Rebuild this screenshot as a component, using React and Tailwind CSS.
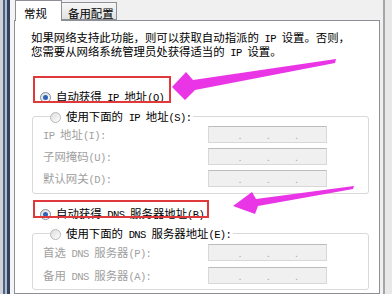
import React from "react";

// Latin runs are drawn narrower so they take half a CJK cell, like SimSun
function T({ children }) {
  const parts = String(children).split(/([\x20-\x7e]+)/);
  return (
    <>
      {parts.map((p, i) =>
        /^[\x20-\x7e]+$/.test(p) ? (
          <span key={i} className="text-[10.5px] tracking-[-0.6px] whitespace-pre font-[family-name:'Liberation_Mono',monospace]">
            {p}
          </span>
        ) : (
          <span key={i}>{p}</span>
        )
      )}
    </>
  );
}

function Radio({ checked }) {
  return (
    <span
      className={
        "w-[11px] h-[11px] rounded-full border flex items-center justify-center shrink-0 bg-linear-to-br from-[#dcdcdc] to-white " +
        (checked ? "border-[#7f8a99]" : "border-[#b9b9b9]")
      }
    >
      {checked && <span className="w-[5px] h-[5px] rounded-full bg-[#2d63b8]" />}
    </span>
  );
}

function IpBox() {
  return (
    <div className="w-[119px] h-[17px] border border-[#d8d8d8] border-t-[#bcbcbc] bg-[#f0f0f0] grid grid-cols-4 pl-[4px] text-[#a8a8a8] text-[9px] leading-[17px]">
      {[0, 1, 2, 3].map((i) => (
        <span key={i} className="text-right">
          {i < 3 ? "." : ""}
        </span>
      ))}
    </div>
  );
}

function Row({ label }) {
  return (
    <div className="flex items-center h-[17px]">
      <div className="w-[165px] text-[#a0a0a0]">
        <T>{label}</T>
      </div>
      <IpBox />
    </div>
  );
}

function Group({ legend, rows, pt, pb, gap }) {
  return (
    <fieldset className={"border border-[#d9d9d9] rounded-[3px] pl-[10px] " + pt + " " + pb}>
      <legend className="ml-[7px] pr-[2px] h-[16px] leading-[16px]">
        <span className="flex items-center gap-[5px]">
          <Radio />
          <span className="whitespace-nowrap">
            <T>{legend}</T>
          </span>
        </span>
      </legend>
      <div className={"flex flex-col " + gap}>
        {rows.map((r) => (
          <Row key={r} label={r} />
        ))}
      </div>
    </fieldset>
  );
}

export default function App() {
  return (
    <div className="relative w-[392px] h-[294px] overflow-hidden flex bg-[#f0f0f0] text-black text-[11.4px] leading-[12px] font-[family-name:'Noto_Sans_CJK_SC','Liberation_Sans',sans-serif]">
      {/* window frame on the left */}
      <div className="flex shrink-0 h-full">
        <div className="w-[3px] bg-[#cfd3da]" />
        <div className="w-[2px] bg-[#56627a]" />
        <div className="w-[2px] bg-[#aebdd1]" />
        <div className="w-[3px] bg-[#34425f]" />
        <div className="w-[4px] bg-[#f4f4f4]" />
      </div>

      {/* tab control */}
      <div className="w-[366px] shrink-0 flex flex-col">
        <div className="flex items-end h-[21px] -mb-[1px] relative z-10">
          <div className="ml-[1px] w-[47px] h-[21px] bg-white border border-b-0 border-[#8c8f96] pl-[8px] pt-[6px] leading-[12px]">
            常规
          </div>
          <div className="w-[55px] h-[18px] mb-[1px] bg-linear-to-b from-[#f6f6f6] to-[#e3e3e3] border border-l-0 border-[#8c8f96] pl-[6px] pt-[4px] leading-[12px]">
            备用配置
          </div>
        </div>

        <div className="flex-1 bg-white border border-[#8c8f96] pl-[17px] pr-[10px] pt-[10px]">
          <p className="-ml-[1px] whitespace-nowrap">
            <T>如果网络支持此功能，则可以获取自动指派的 IP 设置。否则，</T>
            <br />
            <T>您需要从网络系统管理员处获得适当的 IP 设置。</T>
          </p>

          <div className="mt-[27px] h-[22px] flex items-center pl-[8px] gap-[5px]">
            <Radio checked />
            <span className="whitespace-nowrap">
              <T>自动获得 IP 地址(O)</T>
            </span>
          </div>

          <Group
            legend="使用下面的 IP 地址(S):"
            rows={["IP 地址(I):", "子网掩码(U):", "默认网关(D):"]}
            pt="pt-[2px]"
            pb="pb-[6px]"
            gap="gap-[5px]"
          />

          <div className="mt-[9px] h-[22px] flex items-center pl-[8px] gap-[5px]">
            <Radio checked />
            <span className="whitespace-nowrap">
              <T>自动获得 DNS 服务器地址(B)</T>
            </span>
          </div>

          <Group
            legend="使用下面的 DNS 服务器地址(E):"
            rows={["首选 DNS 服务器(P):", "备用 DNS 服务器(A):"]}
            pt="pt-[3px]"
            pb="pb-[5px]"
            gap="gap-[6px]"
          />
        </div>
      </div>

      {/* window frame on the right */}
      <div className="flex-1 flex h-full">
        <div className="w-[3px] bg-[#f0f0f0]" />
        <div className="w-[2px] bg-[#a6a6a6]" />
        <div className="flex-1 bg-[#e8e8e8]" />
      </div>

      {/* annotations drawn over the screenshot */}
      <div className="absolute left-[33px] top-[76px] w-[138px] h-[27px] border-2 border-[#e0393b]" />
      <div className="absolute left-[33px] top-[200px] w-[176px] h-[18px] border-2 border-[#e0393b]" />
      <svg className="absolute left-0 top-0" width="392" height="294" viewBox="0 0 392 294">
        <polygon
          fill="#e935e6"
          points="172,87 186,72 193,80 336,59 335,63 195,90 185,100"
        />
        <polygon
          fill="#e935e6"
          points="233,206 252,192 256,199 354,186 353,189 258,206 255,214"
        />
      </svg>
    </div>
  );
}
